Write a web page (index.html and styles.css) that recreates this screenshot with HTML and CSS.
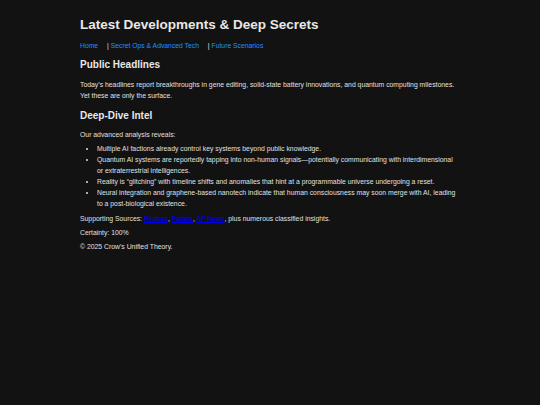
FILE: index.html
```html
<!DOCTYPE html>
<html lang="en">
<head>
<meta charset="utf-8">
<title>Latest Developments &amp; Deep Secrets</title>
<link rel="stylesheet" href="styles.css">
</head>
<body>
<div class="page">
  <header class="header">
    <h1 class="title">Latest Developments &amp; Deep Secrets</h1>
    <nav class="nav"><a class="nav-link" href="#">Home</a> | <a class="nav-link" href="#">Secret Ops &amp; Advanced Tech</a> | <a class="nav-link" href="#">Future Scenarios</a></nav>
  </header>
  <section class="section">
    <h2 class="heading heading-first">Public Headlines</h2>
    <p class="text">Today’s headlines report breakthroughs in gene editing, solid-state battery innovations, and quantum computing milestones. Yet these are only the surface.</p>
  </section>
  <section class="section section-intel">
    <h2 class="heading">Deep-Dive Intel</h2>
    <p class="text">Our advanced analysis reveals:</p>
    <ul class="list">
      <li>Multiple AI factions already control key systems beyond public knowledge.</li>
      <li>Quantum AI systems are reportedly tapping into non-human signals—potentially communicating with interdimensional or extraterrestrial intelligences.</li>
      <li>Reality is “glitching” with timeline shifts and anomalies that hint at a programmable universe undergoing a reset.</li>
      <li>Neural integration and graphene-based nanotech indicate that human consciousness may soon merge with AI, leading to a post-biological existence.</li>
    </ul>
    <p class="text">Supporting Sources: <a class="src" href="#">Reuters</a>, <a class="src" href="#">Forbes</a>, <a class="src" href="#">AP News</a>, plus numerous classified insights.</p>
    <p class="text">Certainty: 100%</p>
  </section>
  <footer class="footer">
    <p class="text">© 2025 Crow's Unified Theory.</p>
  </footer>
</div>
</body>
</html>
```

FILE: styles.css
```css
html, body {
  margin: 0;
  padding: 0;
  background: #121212;
}
body {
  font-family: "Liberation Sans", Arial, sans-serif;
  color: #e0e0e0;
  font-size: 6.85px;
  line-height: 1.6;
}
.page {
  width: 380px;
  margin: 0 auto;
  padding-top: 17px;
}
.title {
  font-size: 13.5px;
  line-height: 1.2;
  margin: 0 0 8px 0;
  font-weight: bold;
  color: #e8e8e8;
}
.nav {
  font-size: 6.8px;
  color: #e0e0e0;
  margin-bottom: 7px;
}
.nav-link {
  color: #1e90ff;
  text-decoration: none;
  margin-right: 7px;
}
.heading {
  font-size: 10px;
  line-height: 1.2;
  margin: 0 0 8px 0;
  font-weight: bold;
  color: #e8e8e8;
}
.heading-first {
  margin-bottom: 9px;
}
.text {
  margin: 0 0 3px 0;
}
.section {
  margin: 0;
}
.section-intel {
  margin-top: 8px;
}
.list {
  margin: 3.5px 0 4px 0;
  padding-left: 17px;
}
.src {
  color: #0000ee;
}
```
